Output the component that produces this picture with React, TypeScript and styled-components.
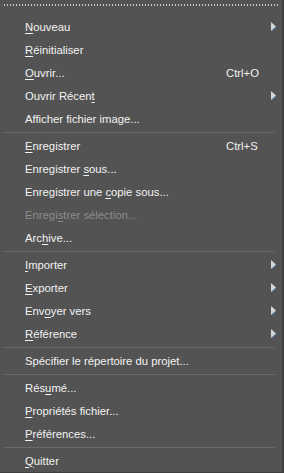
import React from "react";
import styled, { createGlobalStyle } from "styled-components";

const GlobalStyle = createGlobalStyle`
  html, body {
    margin: 0;
    padding: 0;
    background: #535353;
  }
`;

const StyledMenu = styled("div")`
  width: 284px;
  height: 473px;
  box-sizing: border-box;
  background-color: #535353;
  border-right: 2px solid #3e3e3e;
  border-bottom: 1px solid #3e3e3e;
  padding: 4px 0 0 0;
  display: flex;
  flex-direction: column;
  font-family: "Liberation Sans", Arial, sans-serif;
  font-size: 11.3px;
  color: #f2f2f2;
  overflow: hidden;
`;

const StyledTearOff = styled("div")`
  height: 2px;
  margin: 0 3px 9px 3px;
  background-image: radial-gradient(circle, #c8c8c8 0.8px, transparent 1px);
  background-size: 3px 2px;
`;

const StyledItem = styled("div")<{ $disabled?: boolean }>`
  height: 23px;
  display: flex;
  align-items: center;
  padding: 0 5px 0 25px;
  color: ${(p) => (p.$disabled ? "#8c8c8c" : "#f2f2f2")};
  white-space: nowrap;

  .label {
    flex: 1;
  }

  .shortcut {
    width: 51px;
  }

  u {
    text-decoration-thickness: 1px;
    text-underline-offset: 2px;
  }
`;

const StyledSeparator = styled("div")`
  height: 4px;
  display: flex;
  align-items: center;
  padding: 0 7px 0 4px;

  &::after {
    content: "";
    flex: 1;
    height: 1px;
    background-color: #6a6a6a;
  }
`;

function Arrow() {
  return (
    <svg width="6" height="9" viewBox="0 0 6 9" style={{ display: "block" }}>
      <polygon points="0,0 5,4.5 0,9" fill="#d6d6d6" />
      <polygon points="1,8 5,4.5 5,5.5 1,9" fill="#5b8ed2" />
    </svg>
  );
}

type Entry =
  | { sep: true }
  | {
      sep?: false;
      label: React.ReactNode;
      shortcut?: string;
      sub?: boolean;
      disabled?: boolean;
    };

const entries: Entry[] = [
  { label: <><u>N</u>ouveau</>, sub: true },
  { label: <><u>R</u>éinitialiser</> },
  { label: <><u>O</u>uvrir...</>, shortcut: "Ctrl+O" },
  { label: <>Ouvrir Récen<u>t</u></>, sub: true },
  { label: <>Afficher fichier image...</> },
  { sep: true },
  { label: <><u>E</u>nregistrer</>, shortcut: "Ctrl+S" },
  { label: <>Enregistrer <u>s</u>ous...</> },
  { label: <>Enregistrer une <u>c</u>opie sous...</> },
  { label: <>Enregi<u>s</u>trer sélection...</>, disabled: true },
  { label: <>Arc<u>h</u>ive...</> },
  { sep: true },
  { label: <><u>I</u>mporter</>, sub: true },
  { label: <><u>E</u>xporter</>, sub: true },
  { label: <>Env<u>o</u>yer vers</>, sub: true },
  { label: <><u>R</u>éférence</>, sub: true },
  { sep: true },
  { label: <>Spécifier le répertoire du projet...</> },
  { sep: true },
  { label: <>Rés<u>u</u>mé...</> },
  { label: <><u>P</u>ropriétés fichier...</> },
  { label: <><u>P</u>références...</> },
  { sep: true },
  { label: <><u>Q</u>uitter</> },
];

export default function App() {
  return (
    <>
      <GlobalStyle />
      <StyledMenu>
        <StyledTearOff />
        {entries.map((e, i) =>
          e.sep ? (
            <StyledSeparator key={i} />
          ) : (
            <StyledItem key={i} $disabled={e.disabled}>
              <span className="label">{e.label}</span>
              {e.shortcut && <span className="shortcut">{e.shortcut}</span>}
              {e.sub && <Arrow />}
            </StyledItem>
          )
        )}
      </StyledMenu>
    </>
  );
}
